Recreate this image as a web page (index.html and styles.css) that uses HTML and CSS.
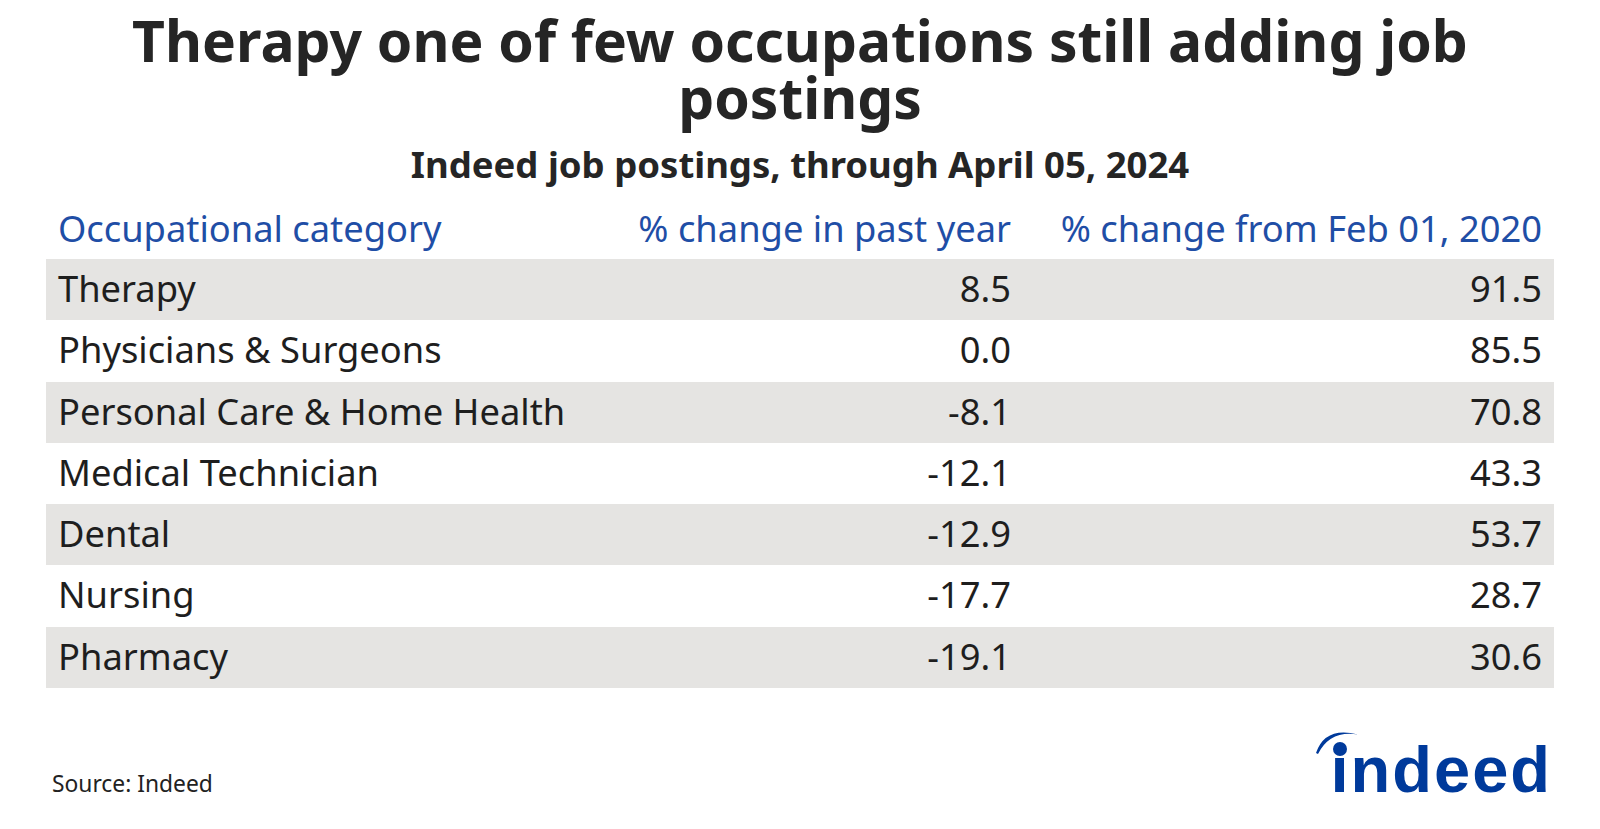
FILE: index.html
```html
<!DOCTYPE html>
<html lang="en">
<head>
<meta charset="utf-8">
<title>Therapy one of few occupations still adding job postings</title>
<link rel="stylesheet" href="styles.css">
</head>
<body>
<div class="chart">
  <h1 class="title">Therapy one of few occupations still adding job postings</h1>
  <h2 class="subtitle">Indeed job postings, through April 05, 2024</h2>
  <div class="table">
    <div class="row head">
      <div class="cell">Occupational category</div>
      <div class="cell num">% change in past year</div>
      <div class="cell num">% change from Feb 01, 2020</div>
    </div>
    <div class="row shade">
      <div class="cell">Therapy</div>
      <div class="cell num">8.5</div>
      <div class="cell num">91.5</div>
    </div>
    <div class="row">
      <div class="cell">Physicians &amp; Surgeons</div>
      <div class="cell num">0.0</div>
      <div class="cell num">85.5</div>
    </div>
    <div class="row shade">
      <div class="cell">Personal Care &amp; Home Health</div>
      <div class="cell num">-8.1</div>
      <div class="cell num">70.8</div>
    </div>
    <div class="row">
      <div class="cell">Medical Technician</div>
      <div class="cell num">-12.1</div>
      <div class="cell num">43.3</div>
    </div>
    <div class="row shade">
      <div class="cell">Dental</div>
      <div class="cell num">-12.9</div>
      <div class="cell num">53.7</div>
    </div>
    <div class="row">
      <div class="cell">Nursing</div>
      <div class="cell num">-17.7</div>
      <div class="cell num">28.7</div>
    </div>
    <div class="row shade">
      <div class="cell">Pharmacy</div>
      <div class="cell num">-19.1</div>
      <div class="cell num">30.6</div>
    </div>
  </div>
  <div class="footer">
    <div class="source">Source: Indeed</div>
    <div class="logo">
      <svg class="logo-mark" width="46" height="32" viewBox="0 0 46 32" aria-hidden="true">
        <path d="M0,26 Q9,-1 42,7.5 Q14,3 2,27 Z" fill="#003a9b"/>
        <circle cx="24" cy="22" r="7" fill="#003a9b"/>
      </svg>
      <span class="logo-text">ındeed</span>
    </div>
  </div>
</div>
</body>
</html>
```
FILE: styles.css
```css
html, body {
  margin: 0;
  padding: 0;
  background: #ffffff;
}

.chart {
  box-sizing: border-box;
  width: 1600px;
  height: 829px;
  padding: 12px 46px 0;
  display: flex;
  flex-direction: column;
  font-family: "Noto Sans", "Open Sans", sans-serif;
  color: #222222;
}

.title {
  margin: 0 20px;
  font-size: 57px;
  line-height: 57px;
  font-weight: 700;
  text-align: center;
  color: #252525;
}

.subtitle {
  margin: 16px 0 0;
  font-size: 36.5px;
  line-height: 44px;
  font-weight: 700;
  text-align: center;
  color: #252525;
}

.table {
  margin-top: 12px;
  display: flex;
  flex-direction: column;
}

.row {
  display: grid;
  grid-template-columns: 554px 423px 1fr;
  height: 61.25px;
  font-size: 36.3px;
  line-height: 58px;
  color: #1e1e1e;
}

.row.head {
  height: 61px;
  line-height: 60px;
  color: #1f4ea6;
}

.row.shade {
  background: #e5e4e2;
}

.cell {
  padding: 0 12px;
  white-space: nowrap;
}

.cell.num {
  text-align: right;
}

.footer {
  margin-top: auto;
  padding: 0 2px 27px 6px;
  display: flex;
  justify-content: space-between;
  align-items: baseline;
}

.source {
  font-size: 22.8px;
  line-height: 30px;
  color: #222222;
}

.logo {
  position: relative;
  padding-left: 15px;
}

.logo-mark {
  position: absolute;
  left: 0;
  top: -10px;
}

.logo-text {
  font-family: "Liberation Sans", Arial, sans-serif;
  font-weight: 700;
  font-size: 65px;
  line-height: 65px;
  color: #003a9b;
  letter-spacing: 2px;
}
```
